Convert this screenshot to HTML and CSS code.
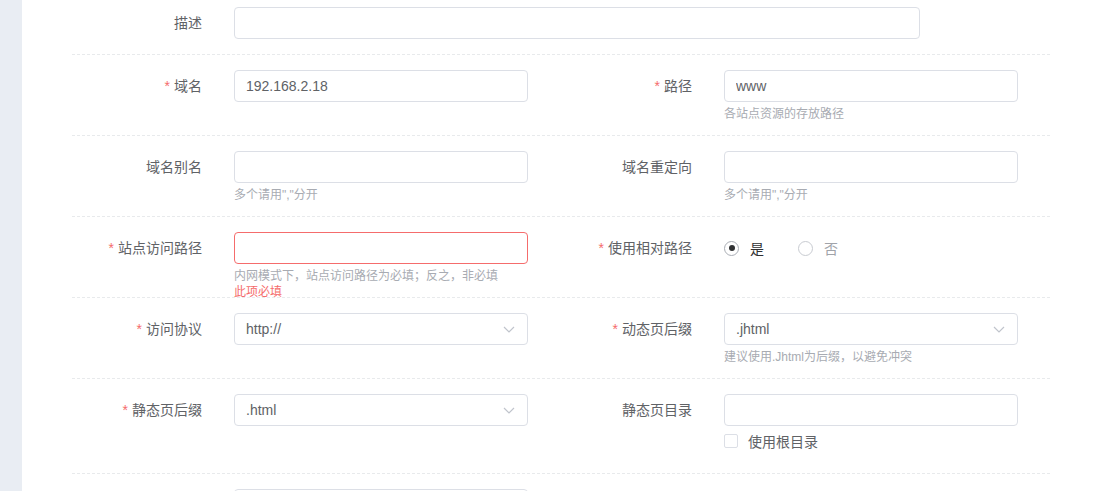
FILE: index.html
```html
<!DOCTYPE html>
<html lang="zh-CN">
<head>
    <meta charset="UTF-8">
    <meta name="viewport" content="width=device-width, initial-scale=1.0">
    <title>站点设置</title>
    <link rel="stylesheet" href="styles.css">
</head>
<body>
    <div class="layout">
        <aside class="sidebar"></aside>
        <main class="content">
            <form class="site-form">
                <div class="form-row first">
                    <div class="form-item">
                        <label class="form-label">描述</label>
                        <div class="form-control">
                            <input type="text" class="input input-wide">
                        </div>
                    </div>
                </div>

                <div class="form-row">
                    <div class="form-item">
                        <label class="form-label required">域名</label>
                        <div class="form-control">
                            <input type="text" class="input" value="192.168.2.18">
                        </div>
                    </div>
                    <div class="form-item">
                        <label class="form-label required">路径</label>
                        <div class="form-control">
                            <input type="text" class="input" value="www">
                            <div class="help">各站点资源的存放路径</div>
                        </div>
                    </div>
                </div>

                <div class="form-row">
                    <div class="form-item">
                        <label class="form-label">域名别名</label>
                        <div class="form-control">
                            <input type="text" class="input">
                            <div class="help">多个请用","分开</div>
                        </div>
                    </div>
                    <div class="form-item">
                        <label class="form-label">域名重定向</label>
                        <div class="form-control">
                            <input type="text" class="input">
                            <div class="help">多个请用","分开</div>
                        </div>
                    </div>
                </div>

                <div class="form-row">
                    <div class="form-item">
                        <label class="form-label required">站点访问路径</label>
                        <div class="form-control">
                            <input type="text" class="input is-error">
                            <div class="help">内网模式下，站点访问路径为必填；反之，非必填</div>
                            <div class="error">此项必填</div>
                        </div>
                    </div>
                    <div class="form-item">
                        <label class="form-label required">使用相对路径</label>
                        <div class="form-control">
                            <div class="radio-group">
                                <label class="radio checked"><span class="radio-dot"></span>是</label>
                                <label class="radio"><span class="radio-dot"></span>否</label>
                            </div>
                        </div>
                    </div>
                </div>

                <div class="form-row">
                    <div class="form-item">
                        <label class="form-label required">访问协议</label>
                        <div class="form-control">
                            <div class="select">
                                <span>http://</span>
                                <svg class="chevron" width="12" height="7" viewBox="0 0 12 7"><path d="M1 1l5 5 5-5" fill="none" stroke="#c0c4cc" stroke-width="1.2"/></svg>
                            </div>
                        </div>
                    </div>
                    <div class="form-item">
                        <label class="form-label required">动态页后缀</label>
                        <div class="form-control">
                            <div class="select">
                                <span>.jhtml</span>
                                <svg class="chevron" width="12" height="7" viewBox="0 0 12 7"><path d="M1 1l5 5 5-5" fill="none" stroke="#c0c4cc" stroke-width="1.2"/></svg>
                            </div>
                            <div class="help">建议使用.Jhtml为后缀，以避免冲突</div>
                        </div>
                    </div>
                </div>

                <div class="form-row">
                    <div class="form-item">
                        <label class="form-label required">静态页后缀</label>
                        <div class="form-control">
                            <div class="select">
                                <span>.html</span>
                                <svg class="chevron" width="12" height="7" viewBox="0 0 12 7"><path d="M1 1l5 5 5-5" fill="none" stroke="#c0c4cc" stroke-width="1.2"/></svg>
                            </div>
                        </div>
                    </div>
                    <div class="form-item">
                        <label class="form-label">静态页目录</label>
                        <div class="form-control">
                            <input type="text" class="input">
                            <label class="checkbox"><span class="checkbox-box"></span>使用根目录</label>
                        </div>
                    </div>
                </div>

                <div class="form-row">
                    <div class="form-item">
                        <span class="form-label"></span>
                        <div class="form-control">
                            <input type="text" class="input">
                        </div>
                    </div>
                </div>
            </form>
        </main>
    </div>
</body>
</html>
```

FILE: styles.css
```css
html, body {
    margin: 0;
    padding: 0;
    height: 100%;
    overflow: hidden;
}
body {
    font-family: "Liberation Sans", "Noto Sans CJK SC", sans-serif;
    font-size: 14px;
    color: #606266;
    background-color: #fff;
}
.layout {
    display: flex;
    min-height: 100%;
}
.sidebar {
    width: 22px;
    flex-shrink: 0;
    background-color: #e9edf3;
}
.content {
    flex: 1;
    padding-left: 50px;
}
.site-form {
    width: 978px;
}
.form-row {
    display: grid;
    grid-template-columns: 490px 488px;
    padding: 15px 0 13px;
    border-bottom: 1px dashed #e8eaec;
}
.form-row.first {
    grid-template-columns: 1fr;
    padding-top: 7px;
    padding-bottom: 15px;
}
.form-item {
    display: flex;
    align-items: flex-start;
}
.form-label {
    width: 162px;
    flex-shrink: 0;
    box-sizing: border-box;
    padding-right: 32px;
    text-align: right;
    line-height: 32px;
    color: #606266;
}
.form-label.required::before {
    content: "*";
    color: #f56c6c;
    margin-right: 4px;
}
.form-control {
    position: relative;
}
.input, .select {
    display: block;
    box-sizing: border-box;
    width: 294px;
    height: 32px;
    padding: 0 11px;
    border: 1px solid #dcdfe6;
    border-radius: 4px;
    font: inherit;
    color: #606266;
    background-color: #fff;
    outline: none;
}
.input-wide {
    width: 686px;
}
.input.is-error {
    border-color: #f56c6c;
}
.select {
    display: flex;
    align-items: center;
    justify-content: space-between;
}
.chevron {
    margin-right: 1px;
}
.help {
    margin-top: 4px;
    font-size: 12px;
    line-height: 16px;
    color: #a8abb2;
}
.error {
    position: absolute;
    top: 100%;
    left: 0;
    font-size: 12px;
    line-height: 16px;
    color: #f56c6c;
}
.radio-group {
    display: flex;
    align-items: center;
    height: 32px;
}
.radio {
    display: flex;
    align-items: center;
    margin-right: 34px;
    color: #a0a3a9;
}
.radio.checked {
    color: #303133;
}
.radio-dot {
    position: relative;
    width: 15px;
    height: 15px;
    box-sizing: border-box;
    border: 1px solid #c8cbd1;
    border-radius: 50%;
    margin-right: 11px;
}
.radio.checked .radio-dot {
    border-color: #a9adb4;
}
.radio.checked .radio-dot::after {
    content: "";
    position: absolute;
    left: 3.5px;
    top: 3.5px;
    width: 6px;
    height: 6px;
    border-radius: 50%;
    background-color: #303133;
}
.checkbox {
    display: flex;
    align-items: center;
    height: 30px;
    margin-bottom: 4px;
    color: #606266;
}
.checkbox-box {
    width: 14px;
    height: 14px;
    box-sizing: border-box;
    border: 1px solid #dcdfe6;
    border-radius: 2px;
    margin-right: 10px;
}
```
